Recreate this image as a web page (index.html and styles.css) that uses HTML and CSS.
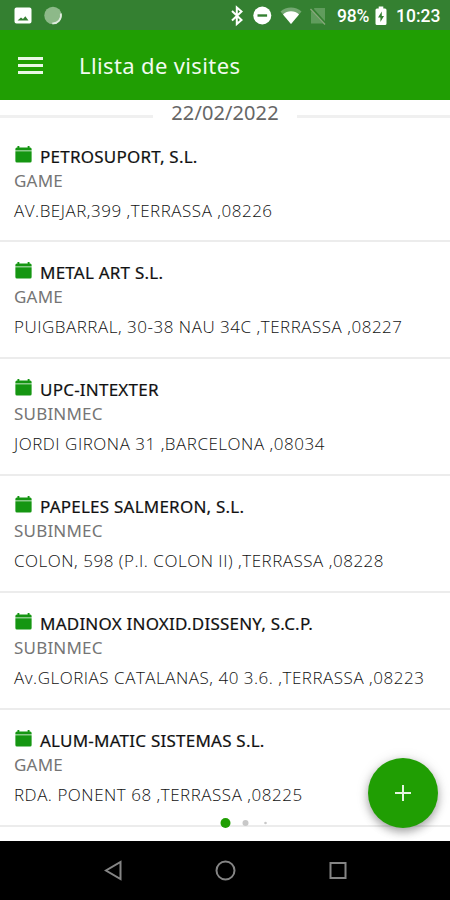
FILE: index.html
```html
<!DOCTYPE html>
<html lang="ca">
<head>
<meta charset="utf-8">
<title>Llista de visites</title>
<link rel="stylesheet" href="styles.css">
</head>
<body>
<svg width="0" height="0" class="defs">
  <symbol id="cal" viewBox="0 0 18 18" preserveAspectRatio="none">
    <path d="M2.600 0h2v1.400h8.800V0h2v1.400H16a1.600 1.600 0 0 1 1.600 1.600v1.400H.4V3A1.600 1.600 0 0 1 2 1.400h.6z"/>
    <path d="M.4 5.300h17.200v9.600a1.600 1.600 0 0 1-1.600 1.600H2a1.600 1.600 0 0 1-1.600-1.600z"/>
  </symbol>
</svg>
<div class="status">
  <svg width="70" height="30" viewBox="0 0 70 30">
    <path fill="#fff" fill-rule="evenodd" d="M16.500 7.500h13a2 2 0 0 1 2 2v12a2 2 0 0 1-2 2h-13a2 2 0 0 1-2-2v-12a2 2 0 0 1 2-2zM17.500 20.500h11l-3.200-4.200-2.300 2.600-2-1.500z"/>
    <circle cx="53" cy="15.500" r="8.700" fill="#8db989"/>
    <path d="M60.800 13.500a8 8 0 0 1-8.500 9.800" fill="none" stroke="#e0ece0" stroke-width="1.800"/>
  </svg>
  <div class="st-right">
    <svg width="110" height="30" viewBox="225 0 110 30">
      <path d="M232 11l9.500 9-4.700 4V7.500l4.700 4-9.500 9" fill="none" stroke="#fff" stroke-width="2"/>
      <circle cx="262.300" cy="15.500" r="9" fill="#fff"/>
      <path d="M257.500 15.500h9.600" stroke="#348031" stroke-width="2.400"/>
      <path d="M280.500 11.500a15.500 15.500 0 0 1 21 0L291 24z" fill="#75a873"/>
      <path d="M283 14.500a11.500 11.500 0 0 1 16 0L291 24z" fill="#fff"/>
      <path d="M314.500 8H325v15.500H311V12z" fill="#609c5d"/>
      <path d="M311.500 8.500l14 15.500" stroke="#348031" stroke-width="3"/>
      <path d="M310.500 9l14.500 15.500" stroke="#88a77c" stroke-width="1.400"/>
    </svg>
    <span class="pct">98%</span>
    <svg class="batt" width="12" height="20" viewBox="0 0 12 20">
      <path d="M3.700 0.500h4.600v2H10a1.500 1.500 0 0 1 1.500 1.500v13.500A1.500 1.500 0 0 1 10 19H2a1.500 1.500 0 0 1-1.500-1.500V4A1.500 1.500 0 0 1 2 2.500h1.700z" fill="#fff"/>
      <path d="M6.800 5.500L3 11.500h2.400v4.500L9 10H6.800z" fill="#348031"/>
    </svg>
    <span class="clock">10:23</span>
  </div>
</div>
<header class="bar">
  <div class="burger"><i></i><i></i><i></i></div>
  <h1>Llista de visites</h1>
</header>
<main>
  <div class="date"><hr><span>22/02/2022</span><hr></div>
  <ul class="visits">
    <li><div class="name"><svg><use href="#cal"/></svg><b>PETROSUPORT, S.L.</b></div><div class="type">GAME</div><div class="addr">AV.BEJAR,399 ,TERRASSA ,08226</div></li>
    <li><div class="name"><svg><use href="#cal"/></svg><b>METAL ART S.L.</b></div><div class="type">GAME</div><div class="addr">PUIGBARRAL, 30-38 NAU 34C ,TERRASSA ,08227</div></li>
    <li><div class="name"><svg><use href="#cal"/></svg><b>UPC-INTEXTER</b></div><div class="type">SUBINMEC</div><div class="addr">JORDI GIRONA 31 ,BARCELONA ,08034</div></li>
    <li><div class="name"><svg><use href="#cal"/></svg><b>PAPELES SALMERON, S.L.</b></div><div class="type">SUBINMEC</div><div class="addr">COLON, 598 (P.I. COLON II) ,TERRASSA ,08228</div></li>
    <li><div class="name"><svg><use href="#cal"/></svg><b>MADINOX INOXID.DISSENY, S.C.P.</b></div><div class="type">SUBINMEC</div><div class="addr">Av.GLORIAS CATALANAS, 40 3.6. ,TERRASSA ,08223</div></li>
    <li><div class="name"><svg><use href="#cal"/></svg><b>ALUM-MATIC SISTEMAS S.L.</b></div><div class="type">GAME</div><div class="addr">RDA. PONENT 68 ,TERRASSA ,08225</div></li>
  </ul>
  <svg class="dots" width="60" height="12" viewBox="0 0 60 12">
    <circle cx="10.500" cy="6" r="5" fill="#209e03"/><circle cx="30.500" cy="6" r="3" fill="#c8c8c8"/><circle cx="50.500" cy="6" r="1.300" fill="#c8c8c8"/>
  </svg>
  <button class="fab" aria-label="Afegir"><svg width="18" height="18" viewBox="0 0 18 18"><path d="M9 1v16M1 9h16" stroke="#e4f5e0" stroke-width="2"/></svg></button>
</main>
<nav class="nav">
  <svg width="450" height="59" viewBox="0 841 450 59" fill="none" stroke="#858585" stroke-width="2">
    <path d="M120.500 862v17L106 870.500z"/>
    <circle cx="225.500" cy="870.500" r="9"/>
    <rect x="330.500" y="863" width="15" height="15"/>
  </svg>
</nav>
</body>
</html>
```
FILE: styles.css
```css
* { box-sizing: border-box; margin: 0; padding: 0; }
body { width: 450px; height: 900px; overflow: hidden; background: #fff; font-family: "Noto Sans", "Open Sans", sans-serif; display: flex; flex-direction: column; }
.defs { position: absolute; }
svg { display: block; flex: none; }
.status { height: 30px; flex: none; background: #348031; display: flex; justify-content: space-between; color: #fff; font: 500 17.500px/32px Roboto, sans-serif; }
.st-right { display: flex; width: 225px; }
.pct { width: 40px; margin-left: 2px; white-space: nowrap; letter-spacing: -0.200px; }
.batt { margin: 6px 9px 0 -2px; }
.clock { white-space: nowrap; }
.bar { height: 70px; flex: none; background: #209e03; display: flex; align-items: center; padding-left: 18px; color: #f2fbf0; }
.burger { width: 25px; display: grid; gap: 4px; margin-right: 36px; }
.burger i { height: 3px; background: #e9f8e6; }
h1 { font-size: 22px; font-weight: 400; line-height: 30px; letter-spacing: 0.370px; white-space: nowrap; }
main { position: relative; height: 741px; flex: none; overflow: hidden; }
.date { height: 25.500px; display: flex; align-items: flex-start; gap: 18px; color: #666; font-size: 20px; line-height: 25px; letter-spacing: 0.100px; }
.date hr { flex: 1; border: 0; height: 3px; background: #f0f0f0; margin-top: 15px; }
.visits { list-style: none; }
.visits li { height: 116.900px; padding: 19px 14px 0; border-bottom: 2px solid #ececec; white-space: nowrap; }
.name { display: flex; height: 24px; font-size: 17px; line-height: 24px; letter-spacing: 0.230px; color: #111; }
.name svg { width: 17px; height: 18px; fill: #159612; margin: 1px 8px 0 1px; }
.name b { font-weight: 400; -webkit-text-stroke: 0.200px #111; }
.type { font-size: 17px; line-height: 24px; letter-spacing: 0.200px; color: #757575; }
.addr { margin-top: 6px; font: 300 17px/24px "Open Sans", sans-serif; letter-spacing: 0.520px; color: #111; }
.dots { position: absolute; left: 215px; top: 717px; }
.fab { position: absolute; left: 368px; top: 658px; width: 70px; height: 70px; border: 0; border-radius: 50%; background: #209e03; box-shadow: 0 4px 8px rgba(0,0,0,.3), 0 1px 14px rgba(0,0,0,.12); display: grid; place-items: center; }
.nav { height: 59px; background: #000; }
```
